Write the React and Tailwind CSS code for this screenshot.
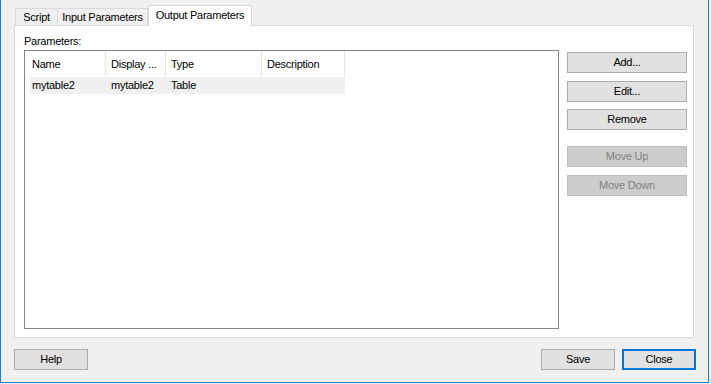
const columns = [
  { label: 'Name', cls: 'w-[81px] pl-[7px]' },
  { label: 'Display ...', cls: 'w-[60px] pl-[5px]' },
  { label: 'Type', cls: 'w-[96px] pl-[5px]' },
  { label: 'Description', cls: 'w-[83px] pl-[5px]' },
];

const rows = [{ name: 'mytable2', display: 'mytable2', type: 'Table' }];

const Button = ({ children, disabled, primary, className = '' }) => (
  <button
    type="button"
    disabled={disabled}
    className={
      'flex items-center justify-center h-[21px] leading-none ' +
      (disabled
        ? 'bg-[#cccccc] border border-[#bfbfbf] text-[#838383] '
        : primary
        ? 'bg-[#e1e1e1] border-2 border-[#0078d7] text-black '
        : 'bg-[#e1e1e1] border border-[#adadad] text-black ') +
      className
    }
  >
    {children}
  </button>
);

const App = () => {
  return (
    <div className="w-[711px] h-[384px] bg-[#f0f0f0] font-['Liberation_Sans',Arial,sans-serif] text-[11px] tracking-[-0.25px] text-black select-none">
      <div className="w-[709px] h-[383px] border-x border-b border-[#1883d7] flex flex-col">
        {/* tab strip */}
        <div className="h-[25px] pl-[14px] flex items-end shrink-0">
          <div className="w-[43px] h-[17px] border border-b-0 border-[#d9d9d9] flex items-center justify-center leading-none">
            Script
          </div>
          <div className="w-[90px] h-[17px] border-t border-r border-[#d9d9d9] flex items-center justify-center leading-none">
            Input Parameters
          </div>
          <div className="relative z-10 -mb-px w-[104px] h-[21px] border border-b-0 border-[#d9d9d9] bg-white flex items-center justify-center leading-none pb-[2px]">
            Output Parameters
          </div>
        </div>

        {/* tab page */}
        <div className="ml-[13px] w-[680px] h-[313px] shrink-0 border border-[#d9d9d9] bg-white flex pt-[7px] pl-[9px] pr-[6px]">
          <div className="flex flex-col">
            <div className="h-[17px] leading-[17px]">Parameters:</div>
            <div className="w-[535px] h-[279px] border border-[#828790] bg-white">
              <div className="flex h-[25px]">
                {columns.map((c) => (
                  <div
                    key={c.label}
                    className={'h-full border-r border-[#e5e5e5] flex items-center pt-[2px] ' + c.cls}
                  >
                    {c.label}
                  </div>
                ))}
              </div>
              {rows.map((r) => (
                <div key={r.name} className="ml-[5px] mt-px w-[315px] h-[17px] flex items-center bg-[#f0f0f0]">
                  <div className="w-[75px] pl-[2px]">{r.name}</div>
                  <div className="w-[61px] pl-[6px]">{r.display}</div>
                  <div className="w-[96px] pl-[5px]">{r.type}</div>
                </div>
              ))}
            </div>
          </div>

          <div className="ml-[8px] pt-[19px] flex flex-col w-[120px]">
            <Button className="w-[120px]">Add...</Button>
            <Button className="w-[120px] mt-[8px]">Edit...</Button>
            <Button className="w-[120px] mt-[7px]">Remove</Button>
            <Button disabled className="w-[120px] mt-[16px]">Move Up</Button>
            <Button disabled className="w-[120px] mt-[8px]">Move Down</Button>
          </div>
        </div>

        {/* dialog buttons */}
        <div className="mt-[11px] pl-[13px] pr-[12px] flex items-center">
          <Button className="w-[74px]">Help</Button>
          <div className="flex-1" />
          <Button className="w-[74px]">Save</Button>
          <Button primary className="w-[74px] ml-[7px]">Close</Button>
        </div>
      </div>
    </div>
  );
};

export default App;
